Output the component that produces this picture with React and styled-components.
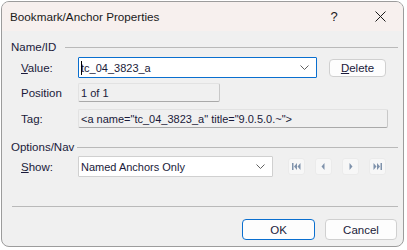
import React from 'react';
import styled, { createGlobalStyle } from 'styled-components';

const GlobalStyle = createGlobalStyle`
  html, body {
    margin: 0;
    padding: 0;
    background: #ffffff;
  }
  body {
    font-family: "Liberation Sans", Arial, sans-serif;
    font-size: 11px;
    color: #000;
  }
`;

const Window = styled.div`
  margin: 1px 0 0 1px;
  width: 403px;
  height: 246px;
  box-sizing: border-box;
  border: 1px solid #9c9c9c;
  border-radius: 8px;
  overflow: hidden;
  background: #f0f0f0;
  display: flex;
  flex-direction: column;
`;

const TitleBar = styled.div`
  height: 29px;
  flex: none;
  background: #f7f0ee;
  display: flex;
  align-items: center;
  padding-left: 8px;
`;

const Title = styled.div`
  flex: 1;
  font-size: 11.7px;
  color: #1a1a1a;
`;

const TitleButton = styled.div`
  width: ${p => p.$w}px;
  height: 29px;
  display: flex;
  align-items: center;
  justify-content: center;
  font-size: 13px;
  color: #1a1a1a;
`;

const Body = styled.div`
  flex: 1;
  padding: 8px 5px 0 9px;
  display: flex;
  flex-direction: column;
`;

const GroupHeader = styled.div`
  display: flex;
  align-items: center;
  height: 16px;
  font-size: 11.5px;
  margin-top: ${p => p.$mt || 0}px;
  color: #1a1a3a;
  &::after {
    content: '';
    flex: 1;
    height: 0;
    border-top: 1px solid #b9b9b9;
    margin-left: ${p => p.$gap || 8}px;
  }
`;

const Row = styled.div`
  display: flex;
  align-items: center;
  margin-top: ${p => p.$mt}px;
  height: ${p => p.$h}px;
`;

const Label = styled.div`
  width: 67px;
  padding-left: 10px;
  box-sizing: border-box;
  flex: none;
  font-size: 11.5px;
  color: #1a1a3a;
`;

const Combo = styled.div`
  width: ${p => p.$w}px;
  height: 100%;
  box-sizing: border-box;
  background: #fff;
  border: 1px solid ${p => (p.$focus ? '#0a6fcf' : '#d0d0d0')};
  border-radius: 1px;
  display: flex;
  align-items: center;
  padding: 0 7px 0 2px;
`;

const ComboText = styled.div`
  flex: 1;
  white-space: nowrap;
  color: #1a1a3a;
  position: relative;
`;

const Caret = styled.span`
  position: absolute;
  left: 0;
  top: -1px;
  width: 1px;
  height: 14px;
  background: #000;
`;

const ReadOnly = styled.div`
  width: ${p => p.$w}px;
  height: 100%;
  box-sizing: border-box;
  border: 1px solid #e2e2e2;
  border-right-color: #c8c8c8;
  border-bottom-color: #a9a9a9;
  border-radius: 2px;
  display: flex;
  align-items: center;
  padding-left: 2px;
  white-space: nowrap;
  color: #1a1a3a;
`;

const Button = styled.div`
  width: ${p => p.$w}px;
  height: ${p => p.$h}px;
  box-sizing: border-box;
  margin-left: ${p => p.$ml || 0}px;
  border: 1px solid ${p => (p.$default ? '#0a6fcf' : '#d0d0d0')};
  border-radius: 4px;
  background: #fdfdfd;
  display: flex;
  align-items: center;
  justify-content: center;
  font-size: 11.5px;
  color: #1a1a3a;
  flex: none;
`;

const NavGroup = styled.div`
  display: flex;
  gap: 10px;
  margin-left: 15px;
`;

const NavButton = styled.div`
  width: 17px;
  height: 17px;
  box-sizing: border-box;
  border: 1px solid #ebebeb;
  border-radius: 3px;
  background: #f7f7f7;
  display: flex;
  align-items: center;
  justify-content: center;
`;

const Separator = styled.div`
  margin: 29px 0 0 1px;
  border-top: 1px solid #b9b9b9;
`;

const Footer = styled.div`
  display: flex;
  justify-content: flex-end;
  margin-top: 12px;
  padding-right: 1px;
`;

const Chevron = () => (
  <svg width="9" height="5" viewBox="0 0 9 5">
    <path d="M0.5 0.5 L4.5 4.5 L8.5 0.5" fill="none" stroke="#606060" strokeWidth="1" />
  </svg>
);

const navColor = '#7f92ab';

const NavIcon = ({ kind }) => {
  const shapes = {
    first: (
      <>
        <rect x="0" y="0" width="1.5" height="7" fill={navColor} />
        <path d="M5 0 L2 3.5 L5 7 Z" fill={navColor} />
        <path d="M8.5 0 L5.5 3.5 L8.5 7 Z" fill={navColor} />
      </>
    ),
    prev: <path d="M5.5 0 L2.5 3.5 L5.5 7 Z" fill={navColor} />,
    next: <path d="M3.5 0 L6.5 3.5 L3.5 7 Z" fill={navColor} />,
    last: (
      <>
        <path d="M0.5 0 L3.5 3.5 L0.5 7 Z" fill={navColor} />
        <path d="M4 0 L7 3.5 L4 7 Z" fill={navColor} />
        <rect x="7.5" y="0" width="1.5" height="7" fill={navColor} />
      </>
    ),
  };
  return (
    <svg width="9" height="7" viewBox="0 0 9 7">
      {shapes[kind]}
    </svg>
  );
};

const CloseIcon = () => (
  <svg width="11" height="11" viewBox="0 0 11 11">
    <path d="M0.5 0.5 L10.5 10.5 M10.5 0.5 L0.5 10.5" stroke="#1a1a1a" strokeWidth="1" />
  </svg>
);

export default function App() {
  return (
    <>
      <GlobalStyle />
      <Window>
        <TitleBar>
          <Title>Bookmark/Anchor Properties</Title>
          <TitleButton $w={46}>?</TitleButton>
          <TitleButton $w={46}>
            <CloseIcon />
          </TitleButton>
        </TitleBar>
        <Body>
          <GroupHeader $gap={9}>Name/ID</GroupHeader>
          <Row $mt={2} $h={21}>
            <Label>
              <u>V</u>alue:
            </Label>
            <Combo $w={239} $focus>
              <ComboText>
                <Caret />
                tc_04_3823_a
              </ComboText>
              <Chevron />
            </Combo>
            <Button $w={57} $h={18} $ml={12}>
              <span>
                <u>D</u>elete
              </span>
            </Button>
          </Row>
          <Row $mt={5} $h={19}>
            <Label>Position</Label>
            <ReadOnly $w={142}>1 of 1</ReadOnly>
          </Row>
          <Row $mt={7} $h={19}>
            <Label>Tag:</Label>
            <ReadOnly $w={310}>&lt;a name="tc_04_3823_a" title="9.0.5.0.~"&gt;</ReadOnly>
          </Row>
          <GroupHeader $mt={11} $gap={3}>Options/Nav</GroupHeader>
          <Row $mt={1} $h={21}>
            <Label>
              <u>S</u>how:
            </Label>
            <Combo $w={195}>
              <ComboText>Named Anchors Only</ComboText>
              <Chevron />
            </Combo>
            <NavGroup>
              <NavButton>
                <NavIcon kind="first" />
              </NavButton>
              <NavButton>
                <NavIcon kind="prev" />
              </NavButton>
              <NavButton>
                <NavIcon kind="next" />
              </NavButton>
              <NavButton>
                <NavIcon kind="last" />
              </NavButton>
            </NavGroup>
          </Row>
          <Separator />
          <Footer>
            <Button $w={73} $h={21} $default>
              OK
            </Button>
            <Button $w={72} $h={21} $ml={10}>
              Cancel
            </Button>
          </Footer>
        </Body>
      </Window>
    </>
  );
}
